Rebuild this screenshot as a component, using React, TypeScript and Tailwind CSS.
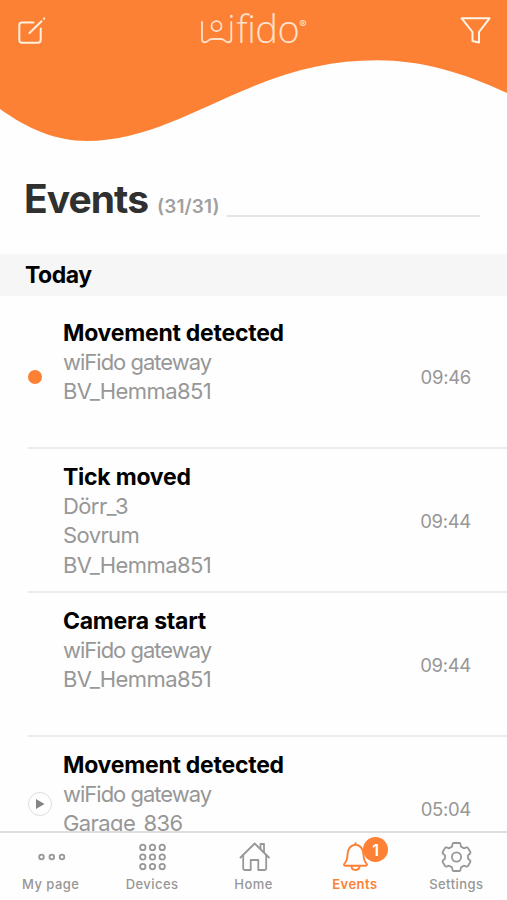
import type { ReactNode } from 'react';

type EventItem = {
  title: string;
  lines: string[];
  time: string;
  marker?: 'unread' | 'play';
};

const events: EventItem[] = [
  { title: 'Movement detected', lines: ['wiFido gateway', 'BV_Hemma851'], time: '09:46', marker: 'unread' },
  { title: 'Tick moved', lines: ['Dörr_3', 'Sovrum', 'BV_Hemma851'], time: '09:44' },
  { title: 'Camera start', lines: ['wiFido gateway', 'BV_Hemma851'], time: '09:44' },
  { title: 'Movement detected', lines: ['wiFido gateway', 'Garage_836'], time: '05:04', marker: 'play' },
];

function Logo() {
  return (
    <div className="flex h-[52px] items-start text-[#ffe1cd]">
      <svg className="mt-[12px]" width="34" height="34" viewBox="199.500 12 34 34" fill="none" stroke="currentColor" strokeWidth="1.800" strokeLinecap="round">
        <path d="M201.500 22V39.500C201.500 43 206 43 208 40.500C209 39.300 210 39 212 39H220C222 39 223 39.300 224 40.500C226 43 230.800 43 230.800 39.500V22" />
        <circle cx="216" cy="26.200" r="5" />
        <circle cx="230.800" cy="16.300" r="0.600" />
      </svg>
      <span className="ml-[2px] mt-[8px] font-['Open_Sans',sans-serif] text-[38px] leading-[40px] font-light tracking-[-0.500px]">fido</span>
      <span className="mt-[17px] text-[11px] leading-[14px]">®</span>
    </div>
  );
}

function Header() {
  return (
    <header className="relative h-[150px] shrink-0">
      <svg className="absolute inset-0" width="507" height="150" viewBox="0 0 507 150">
        <path fill="#fd8134" d="M0 0H507V93C462 72 420 60.300 377 60.300C335 60.300 295 69 253 86.500C195 110 145 141 87 141C56 141 28 129 0 109Z" />
      </svg>
      <div className="relative flex justify-between pl-[17px] pr-[15px]">
        <svg className="mt-[15px]" width="30" height="30" viewBox="17 15 30 30" fill="none" stroke="#fff0df" strokeWidth="2" strokeLinecap="round" strokeLinejoin="round">
          <path d="M33.500 22.500H22Q19.300 22.500 19.300 25.200V40Q19.300 42.700 22 42.700H38Q40.700 42.700 40.700 40V28.500" />
          <path d="M29.500 33L41.500 21.200M43.900 18.700L44.200 18.400" />
        </svg>
        <Logo />
        <svg className="mt-[15px]" width="32" height="30" viewBox="460 15 32 30" fill="none" stroke="#fff5e8" strokeWidth="2" strokeLinejoin="round">
          <path d="M461.700 18.300H489.500L479 32V42.500L472.500 41V32Z" />
        </svg>
      </div>
    </header>
  );
}

function Marker({ kind }: { kind?: 'unread' | 'play' }) {
  return (
    <div className="flex w-[35px] shrink-0 items-center">
      {kind === 'unread' && <span className="mt-[2px] h-[14px] w-[14px] rounded-full bg-[#fd8134]" />}
      {kind === 'play' && (
        <span className="mb-[8px] flex h-[24px] w-[24px] items-center justify-center rounded-full border border-[#dedede]">
          <svg width="10" height="12" viewBox="0 0 10 12"><path d="M1 1L9.500 6L1 11Z" fill="#858585" /></svg>
        </span>
      )}
    </div>
  );
}

function EventRow({ item }: { item: EventItem }) {
  return (
    <li className="ml-[28px] flex h-[144px] shrink-0 border-b-2 border-[#ececec]">
      <Marker kind={item.marker} />
      <div className="flex-1 whitespace-nowrap pt-[14px]">
        <h3 className="text-[23px] leading-[29px] font-[650] tracking-[-0.250px] text-black">{item.title}</h3>
        {item.lines.map((line) => (
          <p key={line} className={`text-[22px] leading-[29.400px] text-[#979797] ${line.includes(' ') ? 'tracking-[-1px]' : 'tracking-[-0.600px]'}`}>{line}</p>
        ))}
      </div>
      <time className="flex items-center pt-[3px] pr-[36px] text-[18.500px] tracking-[-0.300px] text-[#979797]">{item.time}</time>
    </li>
  );
}

function MoreIcon() {
  return (
    <svg width="34" height="34" viewBox="-17 -17 34 34" fill="none" stroke="currentColor" strokeWidth="1.800">
      {[-9.500, 0.800, 11].map((x) => <circle key={x} cx={x} cy="0" r="2.300" />)}
    </svg>
  );
}

function GridIcon() {
  return (
    <svg width="34" height="34" viewBox="-17 -17 34 34" fill="none" stroke="currentColor" strokeWidth="1.800">
      {[-9.600, 0, 9.600].map((y) => [-9.200, 0.500, 10.200].map((x) => <circle key={`${x} ${y}`} cx={x} cy={y} r="2.700" />))}
    </svg>
  );
}

function HomeIcon() {
  return (
    <svg width="34" height="34" viewBox="237 840 34 34" fill="none" stroke="currentColor" strokeWidth="1.800" strokeLinejoin="round" strokeLinecap="round">
      <path d="M240.500 857.500L254.700 843.500L268.900 857.500" />
      <path d="M243.200 855V868.500Q243.200 870 244.700 870H250.700V860H258.300V870H264.700Q266.200 870 266.200 868.500V855" />
      <path d="M260.500 848.500V844H264V852" />
    </svg>
  );
}

function BellIcon() {
  return (
    <svg width="34" height="34" viewBox="338 840 34 34" fill="none" stroke="currentColor" strokeWidth="1.900" strokeLinejoin="round" strokeLinecap="round">
      <path d="M355.500 843.300V844.500C350.500 845.500 347.700 849 347.500 854.500C347.300 859.500 346.500 861.500 344.700 863.300C343.500 864.700 343.900 865.700 345.300 865.700H365.700C367.100 865.700 367.500 864.700 366.300 863.300C364.500 861.500 363.700 859.500 363.500 854.500C363.300 849 360.500 845.500 355.500 844.500" />
      <path d="M351.500 866C351.500 871.300 359.500 871.300 359.500 866" />
    </svg>
  );
}

function GearIcon() {
  return (
    <svg width="34" height="34" viewBox="439 840 34 34" fill="none" stroke="currentColor" strokeWidth="1.800" strokeLinejoin="round">
      <path d="M453.700 843H459.300Q460.200 843 460.400 843.900L461 846.600L463.900 848.300L466.500 847.400Q467.400 847.100 467.900 847.900L470.300 852Q470.800 852.900 470.100 853.500L468 855.400V858.600L470.100 860.500Q470.800 861.100 470.300 862L467.900 866.100Q467.400 866.900 466.500 866.600L463.900 865.700L461 867.400L460.400 870.100Q460.200 871 459.300 871H453.700Q452.800 871 452.600 870.100L452 867.400L449.100 865.700L446.500 866.600Q445.600 866.900 445.100 866.100L442.700 862Q442.200 861.100 442.900 860.500L445 858.600V855.400L442.900 853.500Q442.200 852.900 442.700 852L445.100 847.900Q445.600 847.100 446.500 847.400L449.100 848.300L452 846.600L452.600 843.900Q452.800 843 453.700 843Z" />
      <circle cx="456.500" cy="857" r="4.600" />
    </svg>
  );
}

function Tab({ label, active, badge, children }: { label: string; active?: boolean; badge?: number; children: ReactNode }) {
  return (
    <button className={`relative flex flex-1 flex-col items-center pt-[7px] ${active ? 'text-[#fd8134]' : 'text-[#979797]'}`}>
      {children}
      <span className={`mt-px text-[13px] leading-[18px] tracking-[0.450px] ${active ? 'font-semibold' : 'font-medium'}`}>{label}</span>
      {badge && (
        <span className="absolute left-[59px] top-[4px] flex h-[25px] w-[25px] items-center justify-center rounded-full bg-[#fd8134] text-[16px] font-semibold text-white">{badge}</span>
      )}
    </button>
  );
}

export default function App() {
  return (
    <div className="flex h-[900px] w-[507px] flex-col overflow-hidden bg-[#fefefe] font-[Inter,sans-serif]">
      <Header />
      <div className="flex h-[104px] shrink-0 items-baseline whitespace-nowrap pl-[24px] pr-[27px] pt-[24px]">
        <h1 className="text-[39px] leading-[50px] font-bold tracking-[-0.950px] text-[#303030]">Events</h1>
        <span className="ml-[9px] text-[19px] font-semibold tracking-[0.100px] text-[#a0a0a0]">(31/31)</span>
        <span className="ml-[7px] h-[2px] flex-1 translate-y-[4px] bg-[#e5e5e5]" />
      </div>
      <h2 className="h-[42px] shrink-0 bg-[#f6f6f6] pl-[25px] text-[23px] leading-[43px] font-[650] tracking-[-0.450px] text-black">Today</h2>
      <ul className="flex min-h-0 flex-1 flex-col overflow-hidden pt-[9px]">
        {events.map((item, i) => <EventRow key={i} item={item} />)}
      </ul>
      <nav className="flex h-[69px] shrink-0 border-t-2 border-[#dedede]">
        <Tab label="My page"><MoreIcon /></Tab>
        <Tab label="Devices"><GridIcon /></Tab>
        <Tab label="Home"><HomeIcon /></Tab>
        <Tab label="Events" active badge={1}><BellIcon /></Tab>
        <Tab label="Settings"><GearIcon /></Tab>
      </nav>
    </div>
  );
}
